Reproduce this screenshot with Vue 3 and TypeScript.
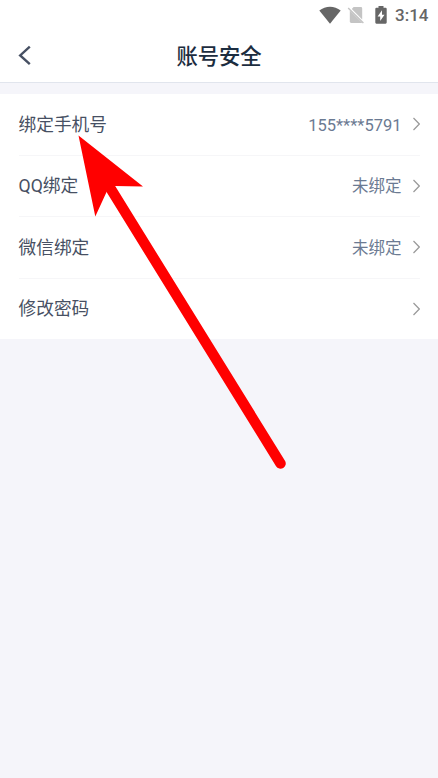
<script setup lang="ts">
interface SettingRow {
  label: string
  value?: string
}

const rows: SettingRow[] = [
  { label: '绑定手机号', value: '155****5791' },
  { label: 'QQ绑定', value: '未绑定' },
  { label: '微信绑定', value: '未绑定' },
  { label: '修改密码' },
]
</script>

<template>
  <div class="screen">
    <div class="status">
      <svg class="wifi" width="22" height="18" viewBox="0 0 22 18">
        <path d="M0.3 4.6C6.5-.7 15.5-.7 21.7 4.6L11 17.8z" fill="#666" />
      </svg>
      <svg class="sim" width="18" height="18" viewBox="0 0 18 18">
        <path d="M6.6 1H13.8Q15.2 1 15.2 2.4V13.4L4.8 3z" fill="#c4c4c4" />
        <path d="M2.8 4.4L15.2 16.8Q14.8 17 13.8 17H4.2Q2.8 17 2.8 15.6z" fill="#c4c4c4" />
        <path d="M1.2 1.9L16.4 17.1" stroke="#c4c4c4" stroke-width="1.4" />
      </svg>
      <svg class="battery" width="12" height="18" viewBox="0 0 12 18">
        <path d="M3.5 0H8.5V1.8H10.6Q11.7 1.8 11.7 2.9V16.6Q11.7 17.7 10.6 17.7H1.4Q.3 17.7 .3 16.6V2.9Q.3 1.8 1.4 1.8H3.5z" fill="#666" />
        <path d="M7 4.2L2.6 10.4H5.2V15L9.5 8.8H7z" fill="#fff" />
      </svg>
      <span class="time">3:14</span>
    </div>
    <header class="header">
      <svg class="back" width="14" height="22" viewBox="0 0 14 22">
        <path d="M11.8 2.6L2.2 11.4L11.8 20.2" fill="none" stroke="#475063" stroke-width="2.4" />
      </svg>
      <h1 class="title">账号安全</h1>
      <span class="spacer"></span>
    </header>
    <main class="list">
      <div v-for="row in rows" :key="row.label" class="row">
        <span class="label">{{ row.label }}</span>
        <span class="value">{{ row.value }}</span>
        <svg class="chevron" width="8" height="14" viewBox="0 0 8 14">
          <path d="M1.5 1L7.3 7L1.5 13" fill="none" stroke="#999" stroke-width="1.2" />
        </svg>
      </div>
    </main>
    <svg class="pointer" width="438" height="778" viewBox="0 0 438 778">
      <path d="M109 186L280.5 463.5" stroke="#f00" stroke-width="10.5" stroke-linecap="round" />
      <path d="M78.5 135.5L143 186.5L115 186L107 191L95.3 216.5z" fill="#f00" />
    </svg>
  </div>
</template>

<style>
body {
  background: #fff;
}
</style>

<style scoped>
.screen {
  position: relative;
  width: 438px;
  height: 778px;
  overflow: hidden;
  background: #f5f5fa;
  font-family: Roboto, "Noto Sans CJK SC", sans-serif;
}
.status {
  display: flex;
  align-items: center;
  box-sizing: border-box;
  height: 30px;
  padding: 0 0 1px 319px;
  background: #fff;
}
.sim {
  margin-left: 6px;
}
.battery {
  margin-left: 9.5px;
}
.time {
  margin-left: 8.5px;
  padding-top: 1px;
  font-size: 17px;
  font-weight: 500;
  line-height: 29px;
  color: #666;
}
.header {
  display: flex;
  align-items: center;
  box-sizing: border-box;
  height: 53px;
  padding: 0 18px 2px;
  background: #fff;
  border-bottom: 1px solid #e1e5ed;
}
.back,
.spacer {
  width: 14px;
}
.title {
  flex: 1;
  margin: 0;
  padding-top: 4px;
  font-size: 21.3px;
  font-weight: 500;
  line-height: 32px;
  text-align: center;
  color: #1c2d40;
}
.list {
  margin-top: 11px;
  padding: 0 18px 0 18.5px;
  background: #fff;
}
.row {
  display: flex;
  align-items: center;
  box-sizing: border-box;
  height: 61.5px;
  border-bottom: 1px solid #f6f6f8;
}
.row:last-child {
  height: 60.5px;
  border-bottom: 0;
}
.label {
  flex: 1;
  padding-top: 1.4px;
  font-size: 17.7px;
  line-height: 26px;
  color: #475063;
}
.value {
  padding-top: 3px;
  font-size: 16.5px;
  line-height: 26px;
  color: #6b7a92;
}
.chevron {
  margin-left: 10.5px;
}
.pointer {
  position: absolute;
  top: 0;
  left: 0;
  pointer-events: none;
}
</style>
